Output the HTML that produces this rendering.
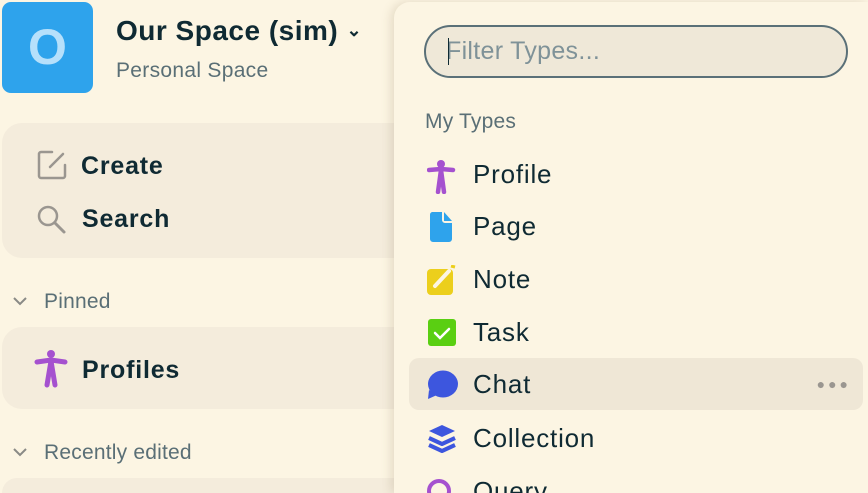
<!DOCTYPE html>
<html><head><meta charset="utf-8"><style>
*{margin:0;padding:0;box-sizing:border-box}
html,body{width:868px;height:493px;overflow:hidden}
body{background:#fcf5e3;font-family:"Liberation Sans",sans-serif;color:#0f2a33;position:relative}
.abs{position:absolute}
.logo{left:2px;top:2px;width:91px;height:91px;background:#2ea3ec;border-radius:9px;color:#b6e0fb;font-size:50px;font-weight:bold;text-align:center;line-height:91px}
.t1{left:116px;top:15px;font-size:28px;font-weight:bold;color:#0f2a33;letter-spacing:.5px}
.t2{left:116px;top:59px;font-size:21px;color:#5a6f76;letter-spacing:.3px}
.card{background:#f4ecdc;border-radius:20px}
.b{font-weight:bold;font-size:25px;letter-spacing:.8px}
.sec{font-size:21px;color:#5a6f76;letter-spacing:.2px}
.panel{left:394px;top:2px;width:474px;height:491px;background:#fcf5e3;border-radius:16px 0 0 0;box-shadow:-3px 0 10px rgba(120,100,60,.18);overflow:hidden}
.filter{left:424px;top:25px;width:424px;height:53px;border:2px solid #5a7078;border-radius:27px;background:#efe8d8;font-size:25px;color:#7f9298;padding-left:20px;line-height:49px;letter-spacing:.3px}
.filter:before{content:"";position:absolute;left:22px;top:11px;width:1px;height:27px;background:#0f2a33}
.row{left:15px;width:454px;height:52px;font-size:26px;line-height:52px;padding-left:64px;letter-spacing:.8px}
.row svg{position:absolute;left:18px;top:12px}
.hl{background:#efe7d6;border-radius:10px}
</style></head><body>
<div class="abs logo">O</div>
<div class="abs t1">Our Space (sim) <span style="font-size:18px;vertical-align:4px">&#8964;</span></div>
<div class="abs t2">Personal Space</div>

<div class="abs card" style="left:2px;top:123px;width:420px;height:135px"></div>
<svg class="abs" style="left:36px;top:149px" width="32" height="32" viewBox="0 0 32 32"><path d="M16 3H5a2 2 0 0 0-2 2v22a2 2 0 0 0 2 2h22a2 2 0 0 0 2-2V16" fill="none" stroke="#9a9690" stroke-width="2.5" stroke-linecap="round"/><path d="M14 18L27 5" stroke="#9a9690" stroke-width="2.5" stroke-linecap="round"/></svg>
<div class="abs b" style="left:81px;top:152px">Create</div>
<svg class="abs" style="left:36px;top:204px" width="32" height="32" viewBox="0 0 32 32"><circle cx="12" cy="12" r="9" fill="none" stroke="#9a9690" stroke-width="2.5"/><path d="M19 19l9 9" stroke="#9a9690" stroke-width="3" stroke-linecap="round"/></svg>
<div class="abs b" style="left:82px;top:205px">Search</div>

<svg class="abs" style="left:12px;top:295px" width="16" height="12" viewBox="0 0 16 12"><path d="M2 3l6 6 6-6" fill="none" stroke="#8a8a86" stroke-width="2"/></svg>
<div class="abs sec" style="left:44px;top:290px">Pinned</div>
<div class="abs card" style="left:2px;top:327px;width:420px;height:82px"></div>
<svg class="abs" style="left:34px;top:349px" width="34" height="40" viewBox="0 0 34 40"><circle cx="17" cy="5" r="4" fill="#a551cf"/><path d="M3 13L17 11L31 13M17 12L13 36M17 12L21 36" fill="none" stroke="#a551cf" stroke-width="5" stroke-linecap="round"/></svg>
<div class="abs b" style="left:82px;top:356px">Profiles</div>
<svg class="abs" style="left:12px;top:446px" width="16" height="12" viewBox="0 0 16 12"><path d="M2 3l6 6 6-6" fill="none" stroke="#8a8a86" stroke-width="2"/></svg>
<div class="abs sec" style="left:44px;top:441px">Recently edited</div>
<div class="abs card" style="left:2px;top:478px;width:420px;height:15px;border-radius:20px 20px 0 0"></div>

<div class="abs panel">
<div class="abs row" style="top:146px"><svg width="30" height="34" viewBox="0 0 30 34"><circle cx="14" cy="4" r="4" fill="#a551cf"/><path d="M2 10L14 9L26 10M14 10L11 32M14 10L17 32" fill="none" stroke="#a551cf" stroke-width="4.5" stroke-linecap="round"/></svg>Profile</div>
<div class="abs row" style="top:198px"><svg width="30" height="30" viewBox="0 0 30 30"><path d="M5 0H15V8a3 3 0 0 0 3 3h7V27a3 3 0 0 1-3 3H6a3 3 0 0 1-3-3V3a3 3 0 0 1 2-3z" fill="#2ea3ec"/><path d="M17 0L25 9H17z" fill="#2ea3ec"/></svg>Page</div>
<div class="abs row" style="top:251px"><svg width="30" height="30" viewBox="0 0 30 30"><rect x="0" y="4" width="26" height="26" rx="4" fill="#eccf1c"/><path d="M8 21L22 6" stroke="#fcf5e3" stroke-width="4" stroke-linecap="round"/><path d="M24 1l4 1" stroke="#eccf1c" stroke-width="3"/></svg>Note</div>
<div class="abs row" style="top:304px"><svg width="30" height="30" viewBox="0 0 30 30"><rect x="1" y="1" width="28" height="27" rx="3" fill="#5acf12"/><path d="M8 15l5 5 9-9" fill="none" stroke="#fff" stroke-width="2.5" stroke-linecap="round"/></svg>Task</div>
<div class="abs row hl" style="top:356px"><svg width="32" height="32" viewBox="0 0 32 32"><ellipse cx="16" cy="14" rx="15" ry="13.5" fill="#3d56de"/><path d="M2 20L1 29L10 25z" fill="#3d56de"/></svg>Chat<span style="position:absolute;right:12px;top:0;color:#9a9690;font-size:14px;letter-spacing:3px">●●●</span></div>
<div class="abs row" style="top:410px"><svg width="30" height="30" viewBox="0 0 30 30"><path d="M15 1L28 7L15 13L2 7z" fill="#3d56de"/><path d="M2 14L15 20L28 14M2 21L15 27L28 21" fill="none" stroke="#3d56de" stroke-width="4" stroke-linejoin="round"/></svg>Collection</div>
<div class="abs row" style="top:463px"><svg width="30" height="30" viewBox="0 0 30 30"><circle cx="12" cy="14" r="10" fill="none" stroke="#a551cf" stroke-width="4"/></svg>Query</div>
</div>
<div class="abs filter">Filter Types...</div>
<div class="abs sec" style="left:425px;top:110px">My Types</div>
</body></html>
